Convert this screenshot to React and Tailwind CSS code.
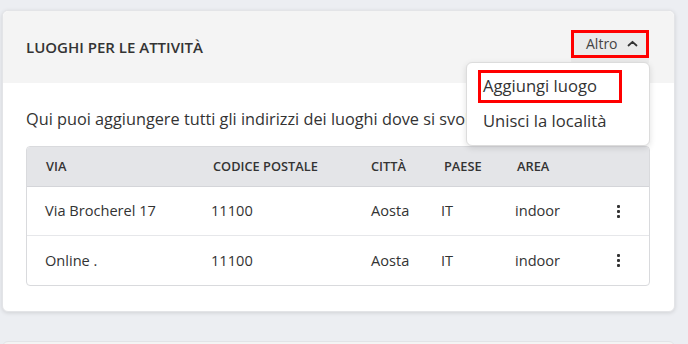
import React from "react";

const rows = [
  { via: "Via Brocherel 17", cap: "11100", city: "Aosta", country: "IT", area: "indoor" },
  { via: "Online .", cap: "11100", city: "Aosta", country: "IT", area: "indoor" },
];

function Kebab() {
  return (
    <div className="flex flex-col items-center gap-[2px]">
      <span className="block w-[3px] h-[3px] rounded-[1px] bg-[#333]"></span>
      <span className="block w-[3px] h-[3px] rounded-[1px] bg-[#333]"></span>
      <span className="block w-[3px] h-[3px] rounded-[1px] bg-[#333]"></span>
    </div>
  );
}

export default function App() {
  return (
    <div
      className="w-[688px] h-[344px] overflow-hidden bg-[#eceef2] pt-[10px] pl-[2px] text-[#333]"
      style={{ fontFamily: '"Open Sans", "Noto Sans", sans-serif' }}
    >
      <div className="w-[673px] bg-white rounded-md shadow-[0_1px_4px_rgba(0,0,0,0.12)] border border-[#e3e4e7]">
        {/* Header */}
        <div className="h-[72px] bg-[#f4f4f4] rounded-t-md flex items-center justify-between pl-[23px] pr-[25px]">
          <h2 className="text-[15px] font-semibold uppercase">Luoghi per le attività</h2>
          <div className="relative">
            <button className="relative h-[35px] w-[78px] bg-[#ebebeb] rounded flex items-start">
              <span className="absolute left-0 top-0 w-[78px] h-[28px] border-[3px] border-[#ff0000]"></span>
              <span className="flex items-center h-[28px] pl-[15px] gap-[9px] text-[14px] text-[#444]">
                Altro
                <svg width="11" height="7" viewBox="0 0 11 7" fill="none">
                  <path d="M1.5 5.5 L5.5 1.8 L9.5 5.5" stroke="#333" strokeWidth="1.8" strokeLinecap="round" strokeLinejoin="round" />
                </svg>
              </span>
            </button>
            {/* Dropdown */}
            <div className="absolute right-[-1px] top-[32px] w-[184px] h-[84px] bg-white border border-[#dcdcdc] rounded-md shadow-[0_2px_6px_rgba(0,0,0,0.12)] z-10 pt-[7px] pl-[11px]">
              <div className="w-[144px] h-[33px] border-[3px] border-[#ff0000] flex items-center pl-[2px] text-[16.6px] text-[#333]">
                Aggiungi luogo
              </div>
              <div className="mt-[3px] pl-[5px] text-[16.6px] leading-[30px] text-[#333]">Unisci la località</div>
            </div>
          </div>
        </div>

        {/* Body */}
        <div className="pt-[24px] pl-[23px] pr-[24px] pb-[25px]">
          <p className="text-[16.3px] leading-[24px] whitespace-nowrap">
            Qui puoi aggiungere tutti gli indirizzi dei luoghi dove si svolgono le tue attività.
          </p>
          <div className="mt-[15px] border border-[#d9dadd] rounded-[4px] overflow-hidden">
            <div className="grid grid-cols-[184px_160px_70px_74px_1fr_56px] h-[40px] items-center bg-[#e4e5e8] border-b border-[#d4d5d9] text-[12.8px] font-semibold uppercase text-[#333]">
              <div className="pl-[19px]">Via</div>
              <div className="pl-[2px]">Codice postale</div>
              <div>Città</div>
              <div className="pl-[3px]">Paese</div>
              <div className="pl-[2px]">Area</div>
              <div></div>
            </div>
            {rows.map((r, i) => (
              <div
                key={i}
                className={`grid grid-cols-[184px_160px_70px_74px_1fr_56px] h-[49px] items-center text-[14.6px] text-[#333] ${i === 0 ? "border-b border-[#e6e7ea]" : ""}`}
              >
                <div className="pl-[18px]">{r.via}</div>
                <div>{r.cap}</div>
                <div>{r.city}</div>
                <div>{r.country}</div>
                <div>{r.area}</div>
                <div className="flex justify-center pr-[6px]">
                  <Kebab />
                </div>
              </div>
            ))}
          </div>
        </div>
      </div>

      <div className="mt-[29px] w-[673px] h-[20px] bg-[#f4f4f4] border border-[#e3e4e7] rounded-md"></div>
    </div>
  );
}
